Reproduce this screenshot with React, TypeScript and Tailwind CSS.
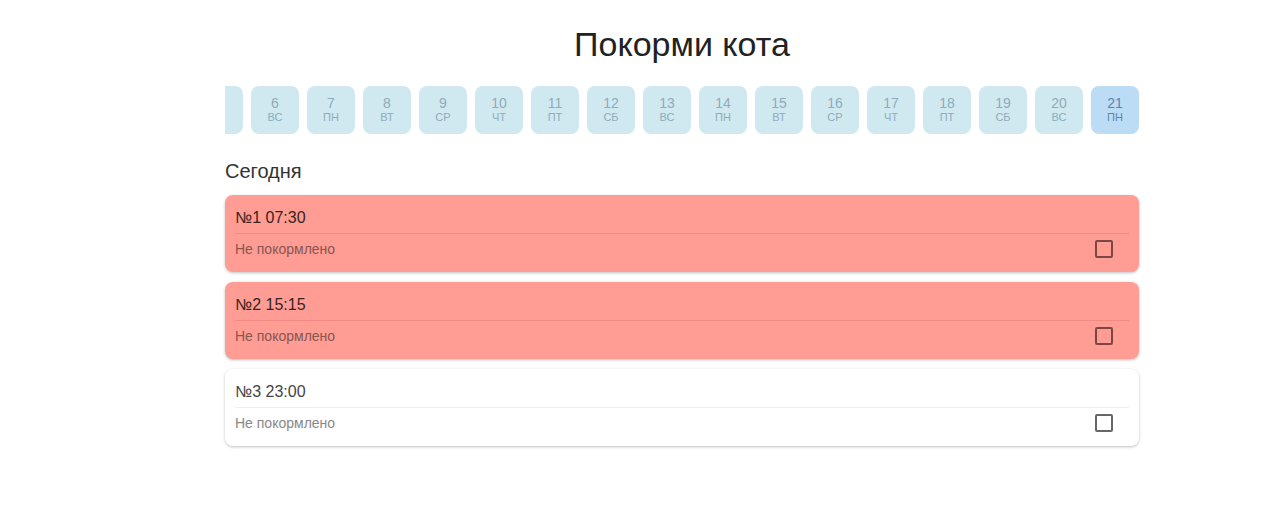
const days = [
  { n: 6, w: 'ВС' },
  { n: 7, w: 'ПН' },
  { n: 8, w: 'ВТ' },
  { n: 9, w: 'СР' },
  { n: 10, w: 'ЧТ' },
  { n: 11, w: 'ПТ' },
  { n: 12, w: 'СБ' },
  { n: 13, w: 'ВС' },
  { n: 14, w: 'ПН' },
  { n: 15, w: 'ВТ' },
  { n: 16, w: 'СР' },
  { n: 17, w: 'ЧТ' },
  { n: 18, w: 'ПТ' },
  { n: 19, w: 'СБ' },
  { n: 20, w: 'ВС' },
  { n: 21, w: 'ПН' },
];

const feedings = [
  { id: 1, time: '07:30', missed: true },
  { id: 2, time: '15:15', missed: true },
  { id: 3, time: '23:00', missed: false },
];

function FeedCard({ id, time, missed }: { id: number; time: string; missed: boolean }) {
  return (
    <div
      className={`rounded-lg px-[10px] pt-[13px] pb-[13px] shadow-[0_1px_3px_rgba(0,0,0,0.25)] ${
        missed ? 'bg-[#ff9d94]' : 'bg-white'
      }`}
    >
      <div className={`text-[16px] leading-[20px] pb-[5px] ${missed ? 'text-[#3a2220]' : 'text-[#444]'}`}>
        №{id} {time}
      </div>
      <div className={`h-px ${missed ? 'bg-[#f08a82]' : 'bg-[#eeeeee]'}`} />
      <div className="flex items-center justify-between pt-[5px]">
        <span className={`text-[14px] leading-[20px] ${missed ? 'text-[#8a5550]' : 'text-[#888]'}`}>
          Не покормлено
        </span>
        <span
          className={`mr-[16px] w-[18px] h-[18px] rounded-[2px] border-2 ${
            missed ? 'border-[#7a4742]' : 'border-[#666]'
          }`}
        />
      </div>
    </div>
  );
}

export default function App() {
  return (
    <div className="min-h-screen bg-white font-['Liberation_Sans',Arial,sans-serif]">
      <div className="w-[914px] ml-[225px] pt-[23px]">
        <h1 className="text-center text-[34px] leading-[42px] text-[#222] font-normal">Покорми кота</h1>

        <div className="mt-[21px] flex justify-end gap-[8px] overflow-hidden">
          <div className="shrink-0 w-[48px] h-[48px] rounded-[8px] bg-[#d0e9f1]" />
          {days.map((d) => {
            const active = d.n === 21;
            return (
              <div
                key={d.n}
                className={`shrink-0 w-[48px] h-[48px] rounded-[8px] flex flex-col items-center justify-center ${
                  active ? 'bg-[#bcdcf5] text-[#5a86b0]' : 'bg-[#d0e9f1] text-[#8fabb9]'
                }`}
              >
                <span className="text-[14px] leading-[15px]">{d.n}</span>
                <span className="text-[11px] leading-[13px]">{d.w}</span>
              </div>
            );
          })}
        </div>

        <div className="mt-[25px] text-[20px] leading-[24px] text-[#333]">Сегодня</div>

        <div className="mt-[12px] flex flex-col gap-[10px]">
          {feedings.map((f) => (
            <FeedCard key={f.id} {...f} />
          ))}
        </div>
      </div>
    </div>
  );
}
